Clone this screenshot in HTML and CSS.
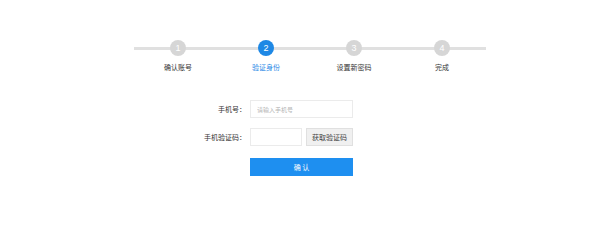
FILE: index.html
```html
<!DOCTYPE html>
<html lang="zh-CN">
<head>
<meta charset="utf-8">
<link rel="stylesheet" href="styles.css">
</head>
<body>
<div class="page">
  <div class="steps">
    <div class="step done"><div class="track"><span class="dot">1</span></div><div class="label">确认账号</div></div>
    <div class="step active"><div class="track"><span class="dot">2</span></div><div class="label">验证身份</div></div>
    <div class="step"><div class="track"><span class="dot">3</span></div><div class="label">设置新密码</div></div>
    <div class="step"><div class="track"><span class="dot">4</span></div><div class="label">完成</div></div>
  </div>
  <form class="form">
    <label class="flabel">手机号：</label>
    <div class="field"><input class="input wide" placeholder="请输入手机号"></div>
    <label class="flabel">手机验证码：</label>
    <div class="field"><input class="input short"><button type="button" class="code-btn">获取验证码</button></div>
    <div></div>
    <div class="field"><button type="button" class="submit">确 认</button></div>
  </form>
</div>
</body>
</html>
```
FILE: styles.css
```css
html, body { margin: 0; padding: 0; background: #fff; }
body { font-family: "Noto Sans CJK SC", "Noto Sans", sans-serif; color: #333; }
.page { width: 600px; height: 208px; padding-top: 40px; box-sizing: border-box; }
.steps { display: flex; margin-left: 134px; width: 352px; }
.step { flex: 1; display: flex; flex-direction: column; align-items: center; }
.track { width: 100%; height: 16px; display: flex; align-items: center; justify-content: center; position: relative; }
.track::before { content: ""; position: absolute; left: 0; right: 0; top: 7px; height: 3px; background: #e0e0e0; }
.dot { position: relative; width: 16px; height: 16px; border-radius: 50%; background: #d6d6d6; color: #fff; font-size: 9px; line-height: 16px; text-align: center; font-family: "Liberation Sans", sans-serif; }
.step.active .dot { background: #1e88e5; }
.label { margin-top: 7px; font-size: 7px; line-height: 9px; color: #333; }
.step.active .label { color: #2b8ae6; }
.form { display: grid; grid-template-columns: 246px 103px; column-gap: 4px; row-gap: 10px; margin-top: 28px; align-items: center; }
.flabel { font-size: 7px; text-align: right; color: #333; }
.field { display: flex; gap: 4px; }
.input { box-sizing: border-box; height: 18px; border: 1px solid #ebebeb; padding: 0 6px; font-size: 6px; font-family: inherit; outline: none; }
.input::placeholder { color: #b5b5b5; }
.wide { width: 103px; }
.short { width: 52px; }
.code-btn { box-sizing: border-box; width: 47px; height: 18px; border: 1px solid #e0e0e0; background: #f0f0f0; font-size: 7px; font-family: inherit; color: #444; padding: 0; }
.submit { margin-top: 2px; box-sizing: border-box; width: 103px; height: 18px; border: none; background: #1e8ff0; color: #fff; font-size: 7px; font-family: inherit; padding: 0; }
```
